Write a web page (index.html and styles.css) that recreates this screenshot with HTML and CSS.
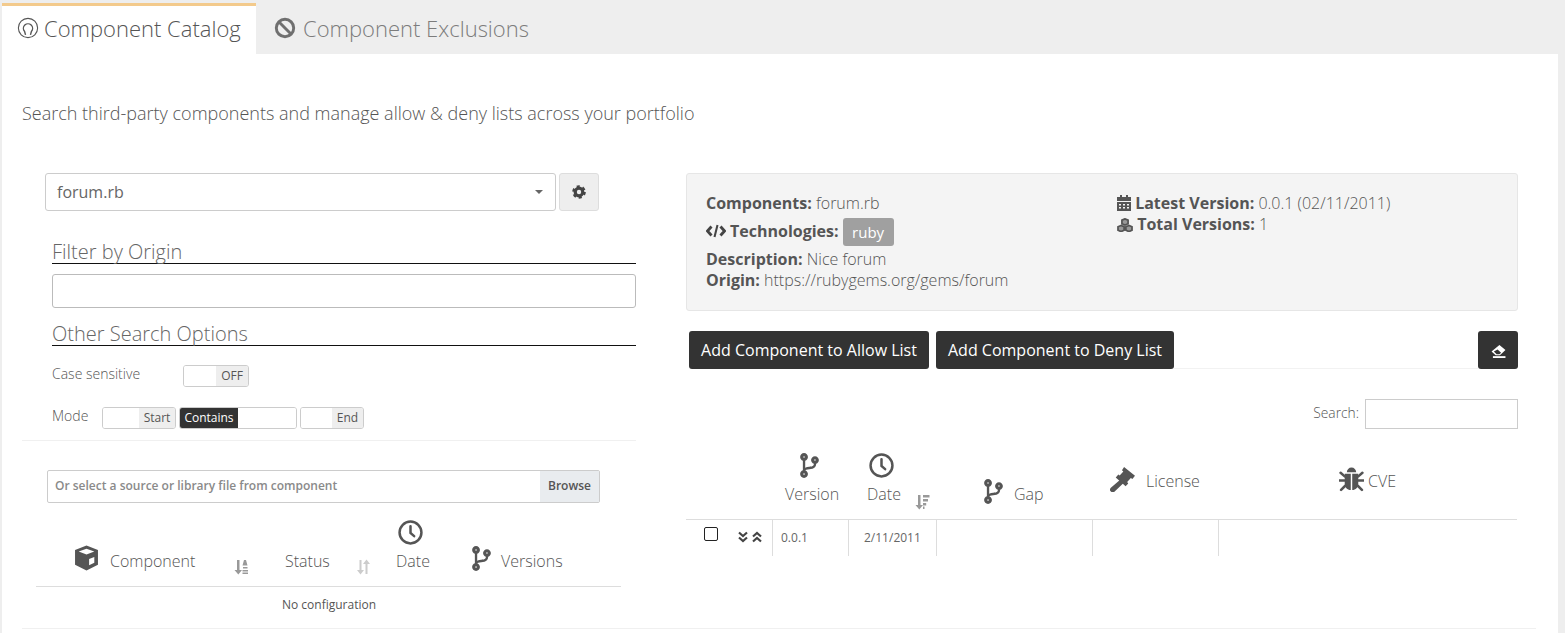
FILE: index.html
```html
<!DOCTYPE html>
<html lang="en">
<head>
<meta charset="utf-8">
<title>Component Catalog</title>
<link rel="stylesheet" href="styles.css">
</head>
<body>
<svg class="defs" width="0" height="0" aria-hidden="true">
  <symbol id="i-branch" viewBox="0 0 384 512"><path d="M384 144c0-44.2-35.8-80-80-80s-80 35.8-80 80c0 36.4 24.3 67.1 57.5 76.8-.6 16.1-4.2 28.5-11 36.9-15.4 19.2-49.3 22.4-85.2 25.7-28.2 2.6-57.4 5.4-81.3 16.9v-144c32.5-10.2 56-40.5 56-76.3 0-44.2-35.8-80-80-80S0 35.8 0 80c0 35.8 23.5 66.1 56 76.3v199.3C23.5 365.9 0 396.2 0 432c0 44.2 35.8 80 80 80s80-35.8 80-80c0-34-21.2-63.1-51.2-74.6 3.1-5.2 7.8-9.8 14.9-13.4 16.2-8.2 40.4-10.4 66.1-12.8 42.2-3.9 90-8.4 118.2-43.4 14-17.4 21.1-39.8 21.5-67.9 31.6-10.8 54.5-40.7 54.5-76.3zM80 64c8.8 0 16 7.2 16 16s-7.2 16-16 16-16-7.2-16-16 7.2-16 16-16zm0 384c-8.8 0-16-7.2-16-16s7.2-16 16-16 16 7.2 16 16-7.2 16-16 16zm224-320c8.8 0 16 7.2 16 16s-7.2 16-16 16-16-7.2-16-16 7.2-16 16-16z"/></symbol>
  <symbol id="i-clock" viewBox="0 0 24 24"><circle cx="12" cy="12" r="10.500" fill="none" stroke="currentColor" stroke-width="2.400"/><path d="M12 6v6.500l3.500 3" fill="none" stroke="currentColor" stroke-width="2.400" stroke-linecap="round"/></symbol>
  <symbol id="i-cube" viewBox="0 0 24 24"><path d="M12 0 1 4.300V18.500L12 24l11-5.500V4.300zM12 3l7.500 2.800L12 8.600 4.500 5.800zM14.500 19V13l5-2v5.500z"/></symbol>
  <symbol id="i-sort-alpha" viewBox="0 0 16 16"><path d="M4 1h2.500v10H9l-3.700 4.500L1.500 11H4z"/><path d="M11 1h2l1.500 5.500h-5zM10 8h4.500v1.500h-4.500zM9.500 11h5.500v1.500H9.500zM9.500 13.500h5.500V15H9.500z"/></symbol>
  <symbol id="i-sort" viewBox="0 0 16 16"><path d="M3.500 1h2v10H8l-3.500 4.500L1 11h2.500zM11.500 15h-2V5H7L10.500.5 14 5h-2.500z"/></symbol>
  <symbol id="i-sort-amount" viewBox="0 0 16 16"><path d="M4 1h2.500v10H9l-3.700 4.500L1.500 11H4zM9 1h6.500v2.500H9zM9 5h5v2.500H9zM9 9h3.200v2.500H9zM9 12.500h1.500V15H9z"/></symbol>
</svg>

<nav class="tabs">
  <a class="tab tab-active">
    <svg class="tab-icon" viewBox="0 0 24 24"><circle cx="12" cy="12" r="10.500" fill="none" stroke="currentColor" stroke-width="1.200"/><path d="M9.300 19.500 8.300 15.800A5 5 0 1 1 15.700 15.800L14.700 19.500" fill="none" stroke="currentColor" stroke-width="1.500" stroke-linejoin="round"/></svg>
    Component Catalog
  </a>
  <a class="tab tab-other">
    <svg class="tab-icon" viewBox="0 0 24 24"><circle cx="12" cy="12" r="9.500" fill="none" stroke="currentColor" stroke-width="3.200"/><path d="M5.500 5.500l13 13" stroke="currentColor" stroke-width="3.200"/></svg>
    Component Exclusions
  </a>
</nav>

<main class="panel">
  <p class="intro">Search third-party components and manage allow &amp; deny lists across your portfolio</p>

  <div class="columns">
    <section class="left">
      <div class="select-row">
        <div class="select"><span>forum.rb</span><i class="caret"></i></div>
        <button class="gear-btn" type="button">
          <svg class="gear" viewBox="0 0 24 24"><circle cx="12" cy="12" r="6.500" fill="none" stroke="currentColor" stroke-width="5.500"/><circle cx="12" cy="12" r="9.800" fill="none" stroke="currentColor" stroke-width="3.800" stroke-dasharray="5.200 5.060"/></svg>
        </button>
      </div>

      <div class="filters">
        <h3 class="filter-title first">Filter by Origin</h3>
        <input class="text-input" type="text">
        <h3 class="filter-title">Other Search Options</h3>
        <div class="option-row case-row">
          <span class="option-label case-label">Case sensitive</span>
          <span class="toggle toggle-case"><span class="toggle-blank"></span><span class="toggle-off">OFF</span></span>
        </div>
        <div class="option-row mode-row">
          <span class="option-label mode-label">Mode</span>
          <span class="toggle toggle-start"><span class="toggle-blank"></span><span class="toggle-off">Start</span></span>
          <span class="toggle toggle-contains"><span class="toggle-on">Contains</span><span class="toggle-blank"></span></span>
          <span class="toggle toggle-end"><span class="toggle-blank"></span><span class="toggle-off">End</span></span>
        </div>
      </div>

      <hr class="divider">

      <div class="file-row">
        <span class="file-text">Or select a source or library file from component</span>
        <span class="file-btn">Browse</span>
      </div>

      <div class="left-table">
        <div class="left-head">
          <div class="lh lh-component">
            <svg class="ic ic-cube"><use href="#i-cube"/></svg><span>Component</span>
            <svg class="ic-sort sort-a"><use href="#i-sort-alpha"/></svg>
          </div>
          <div class="lh lh-status">
            <span>Status</span>
            <svg class="ic-sort sort-b"><use href="#i-sort"/></svg>
          </div>
          <div class="lh lh-date">
            <svg class="ic ic-clock"><use href="#i-clock"/></svg><span>Date</span>
          </div>
          <div class="lh lh-versions">
            <svg class="ic ic-branch"><use href="#i-branch"/></svg><span>Versions</span>
          </div>
        </div>
        <div class="empty">No configuration</div>
      </div>
    </section>

    <section class="right">
      <div class="info">
        <div class="info-col info-col-a">
          <div class="info-line"><b>Components:</b> forum.rb</div>
          <div class="info-line tech-line">
            <svg class="ic-code" viewBox="0 0 20 14"><path d="M5.500 2.500 1.500 7l4 4.500M14.500 2.500l4 4.500-4 4.500" fill="none" stroke="currentColor" stroke-width="2.800"/><path d="M11.500 1 8.500 13" stroke="currentColor" stroke-width="2"/></svg>
            <b>Technologies:</b> <span class="badge">ruby</span>
          </div>
          <div class="info-line">
            <div><b>Description:</b> Nice forum</div>
            <div><b>Origin:</b> https://rubygems.org/gems/forum</div>
          </div>
        </div>
        <div class="info-col info-col-b">
          <div class="info-line">
            <svg class="ic-info" viewBox="0 0 14 16"><path d="M3 0h2v2h4V0h2v2h3v4H0V2h3zM0 7h14v9H0zM2 9v1.500h2V9zm4 0v1.500h2V9zm4 0v1.500h2V9zM2 12v1.500h2V12zm4 0v1.500h2V12zm4 0v1.500h2V12z"/></svg>
            <b>Latest Version:</b> 0.0.1 (02/11/2011)
          </div>
          <div class="info-line">
            <svg class="ic-info ic-cubes" viewBox="0 0 18 16"><path d="M9 1 5.500 2.500V6.500L9 8l3.500-1.500V2.500zM4.500 8.500 1 10v4l3.500 1.500L8 14v-4zm9 0L10 10v4l3.500 1.500L17 14v-4z" fill="#999" stroke="currentColor" stroke-width="2"/></svg>
            <b>Total Versions:</b> 1
          </div>
        </div>
      </div>

      <div class="actions">
        <button class="btn" type="button">Add Component to Allow List</button>
        <button class="btn" type="button">Add Component to Deny List</button>
        <span class="action-fill"></span>
        <button class="btn btn-icon" type="button">
          <svg class="ic-eraser" viewBox="0 0 16 14"><path d="M9 0 15.500 5.500 9.500 11H5L.5 7zM3 7l3 3h3l1.800-1.600L7 4.800z"/><path d="M2 12h13.500v2H2z"/></svg>
        </button>
      </div>

      <div class="search-row">
        <label class="search-label">Search:</label>
        <input class="search-input" type="text">
      </div>

      <div class="right-table">
        <div class="right-head">
          <div class="rh"></div>
          <div class="rh rh-version">
            <svg class="ic ic-branch"><use href="#i-branch"/></svg><span>Version</span>
          </div>
          <div class="rh rh-date">
            <svg class="ic ic-clock"><use href="#i-clock"/></svg>
            <span>Date</span>
            <svg class="ic-sort sort-c"><use href="#i-sort-amount"/></svg>
          </div>
          <div class="rh rh-gap">
            <svg class="ic ic-branch"><use href="#i-branch"/></svg><span>Gap</span>
          </div>
          <div class="rh rh-license">
            <svg class="ic ic-gavel" viewBox="0 0 24 24"><path d="M13.500 0 24 8.500 21.500 11.500 20 10.500 16.500 14.500 17.500 15.800 15 18.500 5.500 10 8 7.200 9.300 8.200 12.800 4.300 11.500 3z"/><path d="M9.500 12.500 12.800 15.500 4.500 23.500A2 2 0 0 1 .8 20z"/></svg>
            <span>License</span>
          </div>
          <div class="rh rh-cve">
            <svg class="ic ic-bug" viewBox="0 0 24 24"><path d="M7.500 5A4.500 4.500 0 0 1 16.500 5z"/><path d="M5.500 6.500h5.800V22C8 22 5.500 19.500 5.500 16zM12.700 6.500h5.800V16c0 3.500-2.500 6-5.800 6z"/><path d="M5.500 9 1.500 5.500M18.500 9l4-3.500M5.500 13H.5M18.500 13h5M6 18l-4 4M18 18l4 4" fill="none" stroke="currentColor" stroke-width="2.400" stroke-linecap="round"/></svg>
            <span>CVE</span>
          </div>
        </div>
        <div class="right-row">
          <div class="rc rc-tools">
            <span class="check"></span>
            <span class="chev">
              <svg viewBox="0 0 12 12"><path d="M2 1.500 6 5l4-3.500M2 6.500 6 10l4-3.500" fill="none" stroke="currentColor" stroke-width="2.200"/></svg>
              <svg viewBox="0 0 12 12"><path d="M2 5.500 6 2l4 3.500M2 10.500 6 7l4 3.500" fill="none" stroke="currentColor" stroke-width="2.200"/></svg>
            </span>
          </div>
          <div class="rc rc-ver">0.0.1</div>
          <div class="rc rc-date">2/11/2011</div>
          <div class="rc"></div>
          <div class="rc"></div>
          <div class="rc rc-last"></div>
        </div>
      </div>
    </section>
  </div>
  <hr class="page-rule">
</main>
</body>
</html>
```

FILE: styles.css
```css
* { box-sizing: border-box; }
html, body { height: 100%; }
body {
  margin: 0;
  background: #eeeeee;
  color: #666;
  font-family: "Open Sans", "Liberation Sans", sans-serif;
  overflow: hidden;
}
.defs { position: absolute; }
b { font-weight: 700; color: #555; }

/* Tabs */
.tabs { display: flex; height: 54px; padding: 3px 0 0 2px; }
.tab {
  display: flex;
  align-items: center;
  height: 51px;
  font-size: 22px;
  font-weight: 300;
  white-space: nowrap;
}
.tab-active {
  width: 254px;
  padding: 0 0 4px 15px;
  background: #fff;
  border-top: 3px solid #f3ca8c;
  color: #555;
}
.tab-other { padding: 0 0 2px 18px; color: #7c7c7c; }
.tab-icon { width: 22px; height: 22px; margin-right: 5px; flex: none; }
.tab-other .tab-icon { margin-right: 7px; color: #6f6f6f; }

/* Panel */
.panel { margin: 0 7px 0 2px; height: 579px; background: #fff; padding: 0 22px 0 20px; overflow: hidden; }
.intro { margin: 0; padding-top: 47px; height: 119px; font-size: 18px; line-height: 24px; font-weight: 300; color: #555; }
.columns { display: flex; height: 455px; }

/* Left */
.left { width: 614px; flex: none; }
.select-row { display: flex; gap: 3px; padding-left: 23px; }
.select {
  display: flex; align-items: center; justify-content: space-between;
  width: 511px; height: 38px; padding: 0 12px 0 11px;
  border: 1px solid #ccc; border-radius: 3px;
  font-size: 16px; color: #666;
}
.caret { width: 0; height: 0; border: 4px solid transparent; border-top-color: #666; border-bottom: 0; }
.gear-btn { width: 40px; height: 38px; padding: 0; background: #eee; border: 1px solid #ddd; border-radius: 3px; color: #444; display: flex; align-items: center; justify-content: center; }
.gear { width: 14px; height: 14px; }
.filters { padding-left: 30px; }
.filter-title {
  margin: 0; height: 27px; font-size: 20px; line-height: 30px; font-weight: 300; color: #666;
  border-bottom: 1px solid #111;
}
.filter-title.first { margin-top: 26px; }
.text-input { display: block; width: 100%; height: 34px; margin: 10px 0 11px; border: 1px solid #bbb; border-radius: 3px; background: #fff; }
.option-row { display: flex; }
.option-label { font-size: 14px; font-weight: 300; color: #555; line-height: 18px; }
.case-row { margin-top: 19px; height: 22px; }
.case-label { width: 131px; }
.mode-row { margin-top: 20px; height: 22px; gap: 3px; }
.mode-label { width: 47px; }
.toggle { display: flex; height: 22px; border: 1px solid #ccc; border-radius: 3px; overflow: hidden; font-size: 12px; line-height: 20px; color: #555; }
.toggle-blank { flex: 1; background: #fff; }
.toggle-off { background: #eee; text-align: center; }
.toggle-on { text-align: center; background: #333; color: #fff; }
.toggle-case { width: 66px; }
.toggle-case .toggle-off { width: 32px; }
.toggle-start { width: 74px; }
.toggle-start .toggle-off { width: 36px; }
.toggle-contains { width: 118px; }
.toggle-contains .toggle-on { width: 58px; }
.toggle-end { width: 64px; }
.toggle-end .toggle-off { width: 31px; }
.divider { margin: 11px 0 0; border: 0; border-top: 1px solid #f0f0f0; }
.file-row {
  display: flex; justify-content: space-between; align-items: center;
  width: 553px; height: 33px; margin: 29px 0 0 25px;
  border: 1px solid #ccc; border-radius: 2px; font-size: 12px; font-weight: 600; color: #8a8a8a;
}
.file-text { padding: 0 0 2px 7px; }
.file-btn { width: 59px; height: 100%; padding-bottom: 2px; display: flex; align-items: center; justify-content: center; background: #e9ecef; color: #555; }
.left-table { width: 585px; margin-left: 14px; }
.left-head { display: grid; grid-template-columns: 232px 119px 76px 1fr; height: 84px; border-bottom: 1px solid #ddd; }
.lh { display: flex; align-items: flex-end; position: relative; font-size: 16px; font-weight: 300; color: #555; padding-bottom: 14px; line-height: 22px; }
.ic { color: #555; fill: currentColor; flex: none; }
.ic-cube { width: 25px; height: 26px; margin: 0 11px 1px 0; }
.lh-component { padding-left: 38px; }
.ic-sort { position: absolute; width: 16px; height: 16px; }
.sort-a { left: 197px; bottom: 11px; fill: #999; }
.sort-b { left: 88px; bottom: 11px; fill: #ccc; }
.lh-status { padding-left: 17px; }
.lh-date { padding-left: 9px; flex-direction: column; align-items: flex-start; justify-content: flex-end; }
.lh-date .ic-clock { width: 25px; height: 25px; margin: 0 0 5px 2px; }
.lh-versions { padding-left: 9px; }
.lh-versions .ic-branch { width: 19px; height: 25px; margin: 0 10px 1px 0; }
.empty { text-align: center; font-size: 12px; color: #555; padding: 9px 0 0; width: 586px; }

/* Right */
.right { width: 832px; flex: none; margin-left: 50px; }
.info {
  display: flex; height: 138px; padding: 19px 19px;
  background: #f4f4f4; border: 1px solid #e6e6e6; border-radius: 3px;
  font-size: 16px; font-weight: 300; line-height: 21px; color: #555;
}
.info-col-a { width: 411px; }
.info-line { min-height: 21px; }
.tech-line { display: flex; align-items: center; height: 28px; margin: 4px 0 3px; gap: 4px; white-space: pre; }
.ic-code { width: 20px; height: 14px; color: #444; margin-top: -2px; }
.tech-line b { margin-top: -2px; }
.badge { display: inline-block; height: 28px; line-height: 28px; padding: 0 9.500px; background: #a0a0a0; color: #fff; border-radius: 3px; font-size: 15px; font-weight: 400; }
.ic-info { width: 14px; height: 16px; fill: #555; color: #555; vertical-align: -2px; }
.ic-cubes { width: 16px; height: 14px; }
.actions { display: flex; margin-top: 20px; height: 38px; padding-left: 3px; gap: 7px; }
.btn { height: 38px; padding: 0; background: #333; color: #fff; border: 0; border-radius: 3px; font: 400 16px "Open Sans", sans-serif; }
.btn:nth-child(1) { width: 240px; }
.btn:nth-child(2) { width: 238px; }
.action-fill { flex: 1; margin: 0 -7px; border-bottom: 1px solid #f2f2f2; }
.btn-icon { width: 40px; display: flex; align-items: center; justify-content: center; }
.ic-eraser { width: 15px; height: 13px; fill: #fff; margin-top: 2px; }
.search-row { display: flex; justify-content: flex-end; align-items: center; gap: 6px; margin-top: 30px; height: 30px; }
.search-label { font-size: 13.800px; font-weight: 300; color: #555; margin-top: -4px; }
.search-input { width: 153px; height: 30px; border: 1px solid #ccc; background: #fff; }
.right-table { width: 831px; }
.right-head, .right-row { display: grid; grid-template-columns: 87px 76px 88px 156px 126px 1fr; }
.right-head { height: 91px; border-bottom: 1px solid #ddd; }
.rh { position: relative; display: flex; font-size: 16px; font-weight: 300; color: #555; line-height: 22px; }
.rh-version { flex-direction: column; padding: 0 0 14px 12px; justify-content: flex-end; }
.rh-version .ic-branch { width: 19px; height: 25px; margin: 0 0 5px 15px; }
.rh-date { flex-direction: column; padding: 0 0 14px 18px; justify-content: flex-end; }
.rh-date .ic-clock { width: 25px; height: 25px; margin: 0 0 5px 2px; }
.sort-c { left: 65px; bottom: 9px; fill: #999; }
.rh-gap { align-items: flex-end; padding: 0 0 14px 47px; }
.rh-gap .ic-branch { width: 19px; height: 25px; margin: 0 11px 1px 0; }
.rh-license { align-items: center; padding: 14px 0 0 17px; }
.rh-license .ic-gavel { width: 25px; height: 25px; margin: -4px 11px 0 0; }
.rh-cve { align-items: center; padding: 14px 0 0 120px; }
.rh-cve .ic-bug { width: 25px; height: 25px; margin: -4px 4px 0 0; }
.right-row { height: 35px; }
.rc { border-right: 1px solid #ddd; font-size: 12px; color: #666; line-height: 36px; }
.rc-last { border-right: 0; }
.rc-ver { padding-left: 8px; }
.rc-date { padding-left: 15px; }
.rc-tools { display: flex; padding: 7px 0 0 18px; }
.check { width: 14px; height: 14px; border: 1px solid #222; border-radius: 2px; background: #fff; }
.chev { display: flex; margin: 4px 0 0 19px; color: #444; gap: 2px; }
.chev svg { width: 12px; height: 12px; }
.page-rule { margin: 0; border: 0; border-top: 1px solid #f0f0f0; }
```
